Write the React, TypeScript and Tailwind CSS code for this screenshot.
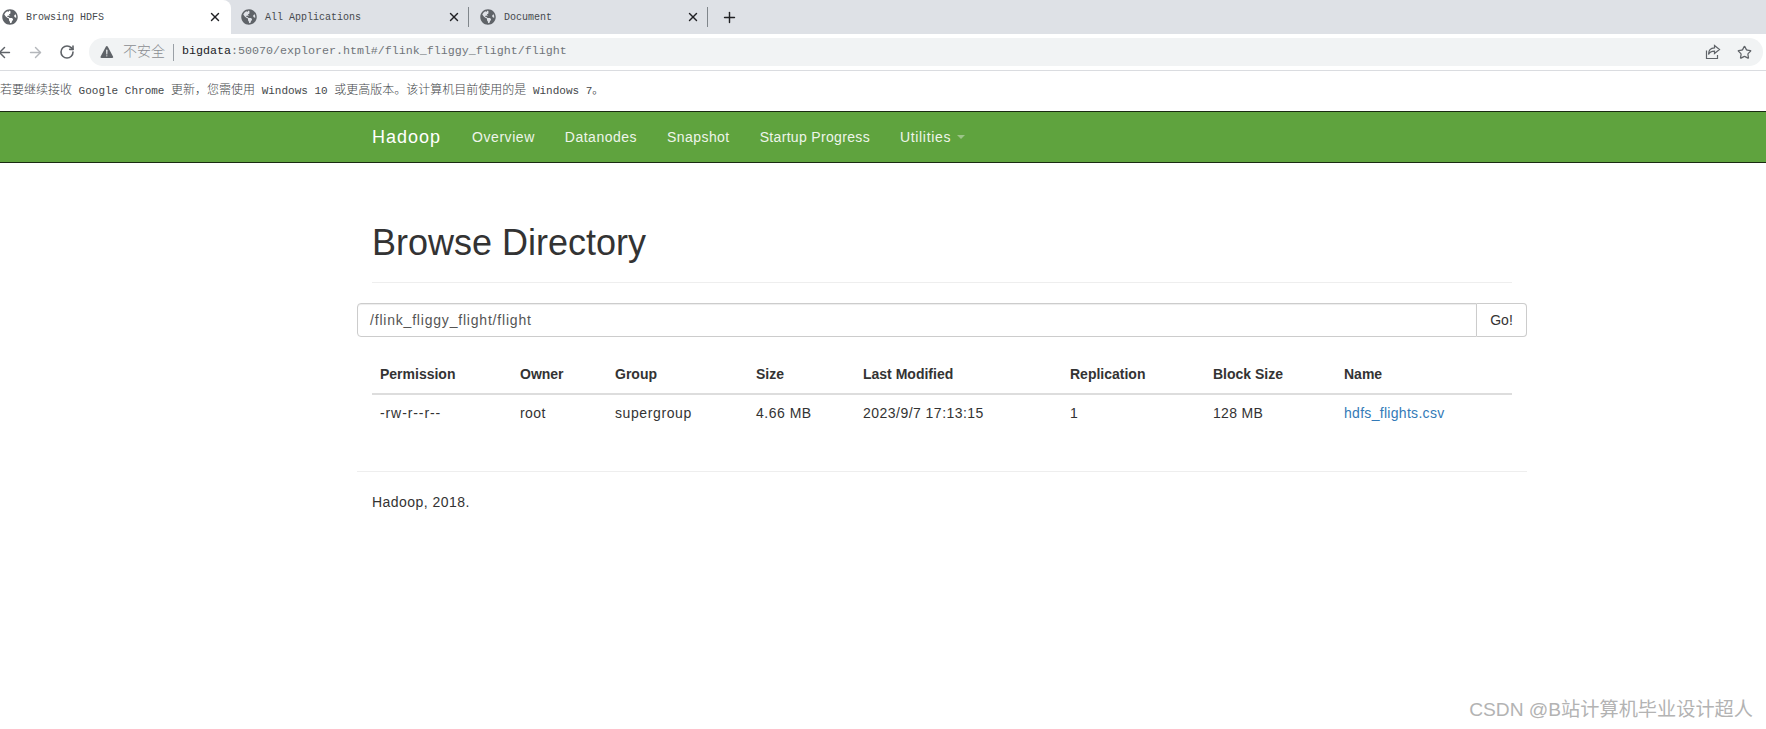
import { ArrowLeft, ArrowRight, Plus, RotateCw, Star, X } from 'lucide-react'
import { FaGlobeAmericas } from 'react-icons/fa'
import { IoWarning } from 'react-icons/io5'

const tabs = [
  { title: 'Browsing HDFS', width: 'w-[231px]', active: true },
  { title: 'All Applications', width: 'w-[239px]', active: false },
  { title: 'Document', width: 'w-[239px]', active: false },
]

const navItems = [
  { label: 'Overview', tracking: 'tracking-[0.55px]' },
  { label: 'Datanodes', tracking: 'tracking-[0.5px]' },
  { label: 'Snapshot', tracking: 'tracking-[0.43px]' },
  { label: 'Startup Progress', tracking: 'tracking-[0.33px]' },
]

const columns = [
  { label: 'Permission', value: '-rw-r--r--', width: 'w-[140px]', tracking: 'tracking-[0.9px]' },
  { label: 'Owner', value: 'root', width: 'w-[95px]', tracking: 'tracking-[0.4px]' },
  { label: 'Group', value: 'supergroup', width: 'w-[141px]', tracking: 'tracking-[0.6px]' },
  { label: 'Size', value: '4.66 MB', width: 'w-[107px]', tracking: 'tracking-[0.5px]' },
  { label: 'Last Modified', value: '2023/9/7 17:13:15', width: 'w-[207px]', tracking: 'tracking-[0.47px]' },
  { label: 'Replication', value: '1', width: 'w-[143px]', tracking: '' },
  { label: 'Block Size', value: '128 MB', width: 'w-[131px]', tracking: 'tracking-[0.3px]' },
  { label: 'Name', value: 'hdfs_flights.csv', width: 'w-[176px]', tracking: 'tracking-[0.3px]' },
]

function BrowserChrome() {
  return (
    <div className="font-['Liberation_Mono','Noto_Sans_CJK_SC',monospace] text-[#3c4043]">
      <div className="flex h-[34px] bg-[#dee1e6]">
        {tabs.map((tab, index) => (
          <div
            key={tab.title}
            className={`${tab.width} flex items-center ${
              tab.active ? 'rounded-tr-lg bg-white pl-[2px]' : 'pl-[10px]'
            }`}
          >
            <FaGlobeAmericas className="h-[16px] w-[16px] shrink-0 text-[#5f6368]" />
            <span className="ml-[8px] flex-1 text-[10px] text-[#45494d]">{tab.title}</span>
            <X className="h-[14px] w-[14px] shrink-0 text-[#202124]" strokeWidth={2.4} />
            <span className={`ml-[7px] mr-[1px] h-[20px] w-px ${index === 0 ? 'bg-transparent' : 'bg-[#80868b]'}`} />
          </div>
        ))}
        <div className="ml-[12px] flex items-center">
          <Plus className="h-[17px] w-[17px] text-[#202124]" strokeWidth={2} />
        </div>
      </div>

      <div className="flex h-[37px] items-center border-b border-[#dadce0] bg-white">
        <ArrowLeft className="ml-[-4px] h-[17px] w-[17px] text-[#5f6368]" strokeWidth={2} />
        <ArrowRight className="ml-[14px] h-[17px] w-[17px] text-[#b4b7bb]" strokeWidth={2} />
        <RotateCw className="ml-[15px] h-[16px] w-[16px] text-[#5f6368]" strokeWidth={2.4} />
        <div className="ml-[14px] mr-[3px] flex h-[28px] flex-1 items-center rounded-full bg-[#f1f3f4]">
          <IoWarning className="ml-[10px] h-[16px] w-[16px] text-[#5f6368]" />
          <span className="ml-[8px] text-[14px] font-light text-[#8a8d91]">不安全</span>
          <span className="ml-[8px] h-[17px] w-px bg-[#9aa0a6]" />
          <span className="ml-[8px] text-[11.67px] text-[#70757a]">
            <span className="text-[#202124]">bigdata</span>:50070/explorer.html#/flink_fliggy_flight/flight
          </span>
          <svg viewBox="0 0 16 16" className="ml-auto h-[16px] w-[16px] text-[#5f6368]" fill="none" stroke="currentColor" strokeWidth="1.2">
            <path d="M1.5 6.5v8h11v-3.5" />
            <path d="M9.5 1.5l5 4-5 4v-2.4c-3 0-5 1-6 3.4 0-4 2-6.5 6-6.6z" />
          </svg>
          <Star className="ml-[16px] mr-[11px] h-[15px] w-[15px] text-[#5f6368]" strokeWidth={2} />
        </div>
      </div>

      <div className="flex h-[40px] items-center whitespace-pre bg-white text-[11px] text-[#44474a]">
        <span className="text-[12px] font-light">若要继续接收</span> Google Chrome{' '}
        <span className="text-[12px] font-light">更新，您需使用</span> Windows 10{' '}
        <span className="text-[12px] font-light">或更高版本。该计算机目前使用的是</span> Windows 7。
      </div>
    </div>
  )
}

function Navbar() {
  return (
    <nav className="h-[52px] border-y border-[#1a2a12] bg-[#5fa33e]">
      <div className="ml-[357px] flex h-full w-[1170px] items-center px-[15px] text-white">
        <span className="mr-[16px] text-[18px] tracking-[1px]">Hadoop</span>
        {navItems.map((item) => (
          <a key={item.label} className={`px-[15px] text-[14px] text-[#eef5ea] ${item.tracking}`}>
            {item.label}
          </a>
        ))}
        <a className="flex items-center px-[15px] text-[14px] tracking-[0.67px] text-[#eef5ea]">
          Utilities
          <span className="ml-[6px] h-0 w-0 border-x-[4px] border-t-[4px] border-x-transparent border-t-[#9cc488]" />
        </a>
      </div>
    </nav>
  )
}

export default function App() {
  return (
    <div className="relative h-screen overflow-hidden bg-white font-['Liberation_Sans',sans-serif] text-[14px] text-[#333]">
      <BrowserChrome />
      <Navbar />

      <main className="ml-[357px] w-[1170px]">
        <div className="mx-[15px] mt-[60px] border-b border-[#eee] pb-[19px]">
          <h1 className="h-[40px] text-[36px] leading-[40px] font-normal">Browse Directory</h1>
        </div>

        <div className="mt-[20px] flex h-[34px]">
          <div className="flex flex-1 items-center rounded-l border border-[#ccc] px-[12px] tracking-[0.8px] text-[#555] shadow-[inset_0_1px_1px_rgba(0,0,0,0.075)]">
            /flink_fliggy_flight/flight
          </div>
          <button className="w-[50px] rounded-r border border-l-0 border-[#ccc] bg-white">Go!</button>
        </div>

        <table className="mx-[15px] mt-[19px] w-[1140px] table-fixed">
          <thead>
            <tr className="border-b-2 border-[#ddd]">
              {columns.map((col) => (
                <th key={col.label} className={`${col.width} p-[8px] text-left font-bold`}>
                  {col.label}
                </th>
              ))}
            </tr>
          </thead>
          <tbody>
            <tr>
              {columns.map((col) => (
                <td key={col.label} className={`p-[8px] ${col.tracking} ${col.label === 'Name' ? 'text-[#337ab7]' : ''}`}>
                  {col.value}
                </td>
              ))}
            </tr>
          </tbody>
        </table>

        <div className="mt-[39px] border-t border-[#eee] px-[15px] pt-[20px] tracking-[0.46px]">Hadoop, 2018.</div>
      </main>

      <div className="absolute bottom-[4px] right-[13px] font-['Liberation_Sans','Noto_Sans_CJK_SC',sans-serif] text-[19.2px] text-[#b3b3b3]">
        CSDN @B站计算机毕业设计超人
      </div>
    </div>
  )
}
